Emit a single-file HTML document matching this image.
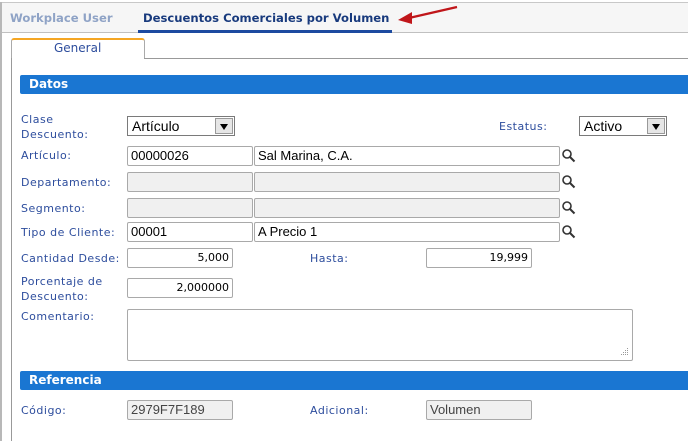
<!DOCTYPE html>
<html><head><meta charset="utf-8"><style>
*{box-sizing:border-box;margin:0;padding:0}
body{width:688px;height:441px;background:#fff;position:relative;overflow:hidden;font-family:"DejaVu Sans",Verdana,sans-serif}
.a{position:absolute}
.lbl{position:absolute;font-size:11px;color:#2d4d9d;line-height:15px;letter-spacing:0.5px}
.in{position:absolute;height:20px;border:1px solid #a9a9a9;border-radius:2px;background:#fff;font-family:"Liberation Sans",Arial,sans-serif;font-size:13px;color:#000;line-height:18px;padding-left:3px;white-space:nowrap}
.dis{background:#f0f0f0}
.num{text-align:right;padding-right:3px;font-family:"DejaVu Sans",Verdana,sans-serif;font-size:11px}
.bar{position:absolute;left:20px;width:668px;height:19px;background:#1a76d2;color:#fff;font-weight:bold;font-size:12px;line-height:19px;padding-left:9px;border-radius:2px 0 0 2px}
.sel{position:absolute;height:20px;border:1px solid #7a7a7a;background:#fff;font-family:"Liberation Sans",Arial,sans-serif;font-size:14px;line-height:18px;padding-left:4px}
.sel b{position:absolute;right:1px;top:1px;width:18px;height:16px;background:#e6e6e6;border:1px solid #999}
.sel b:after{content:"";position:absolute;left:4px;top:5px;border-left:4px solid transparent;border-right:4px solid transparent;border-top:6px solid #000}
.mag{position:absolute;width:16px;height:16px}
</style></head><body>
<div class="a" style="left:0;top:2px;width:688px;height:30px;background:#f6f6f6;border-top:1px solid #c8c8c8;border-left:1px solid #aaa"></div>
<div class="a" style="left:0;top:32px;width:688px;height:1px;background:#c0c0c0"></div>
<div class="a" style="left:0;top:2px;width:2px;height:439px;background:#b8b8b8"></div>
<div class="a" style="left:10px;top:11px;font-size:11.6px;font-weight:bold;color:#8fa3c6">Workplace User</div>
<div class="a" style="left:143px;top:11px;font-size:11.6px;font-weight:bold;color:#183a7d">Descuentos Comerciales por Volumen</div>
<div class="a" style="left:138px;top:30px;width:254px;height:3px;background:#1c4aa0"></div>
<svg class="a" style="left:395px;top:4px" width="65" height="22"><path d="M62 3 L14 14" stroke="#c0161a" stroke-width="2.2"/><path d="M3 16 L17 8 L17 20 Z" fill="#c0161a"/></svg>
<div class="a" style="left:11px;top:38px;width:134px;height:21px;border:1px solid #aaa;border-top:2px solid #f5a623;border-bottom:none;background:#fff;border-radius:3px 3px 0 0"></div>
<div class="a" style="left:54px;top:41px;font-size:12px;color:#2d4d9d">General</div>
<div class="a" style="left:144px;top:58px;width:544px;height:1px;background:#999"></div>
<div class="a" style="left:11px;top:58px;width:1px;height:383px;background:#999"></div>
<div class="bar" style="top:75px">Datos</div>
<div class="lbl" style="left:21px;top:112px">Clase<br>Descuento:</div>
<div class="sel" style="left:127px;top:116px;width:108px">Artículo<b></b></div>
<div class="lbl" style="left:499px;top:119px">Estatus:</div>
<div class="sel" style="left:579px;top:116px;width:88px">Activo<b></b></div>
<div class="lbl" style="left:21px;top:148px">Artículo:</div>
<div class="in" style="left:127px;top:146px;width:126px">00000026</div>
<div class="in" style="left:254px;top:146px;width:306px">Sal Marina, C.A.</div>
<div class="lbl" style="left:21px;top:175px">Departamento:</div>
<div class="in dis" style="left:127px;top:172px;width:126px"></div>
<div class="in dis" style="left:254px;top:172px;width:306px"></div>
<div class="lbl" style="left:21px;top:201px">Segmento:</div>
<div class="in dis" style="left:127px;top:198px;width:126px"></div>
<div class="in dis" style="left:254px;top:198px;width:306px"></div>
<div class="lbl" style="left:21px;top:225px">Tipo de Cliente:</div>
<div class="in" style="left:127px;top:222px;width:126px">00001</div>
<div class="in" style="left:254px;top:222px;width:306px">A Precio 1</div>
<svg class="mag" style="left:561px;top:148px" viewBox="0 0 16 16"><circle cx="6" cy="6" r="4" fill="none" stroke="#333" stroke-width="1.6"/><path d="M9 9 L13.5 13.5" stroke="#333" stroke-width="2"/></svg>
<svg class="mag" style="left:561px;top:174px" viewBox="0 0 16 16"><circle cx="6" cy="6" r="4" fill="none" stroke="#333" stroke-width="1.6"/><path d="M9 9 L13.5 13.5" stroke="#333" stroke-width="2"/></svg>
<svg class="mag" style="left:561px;top:200px" viewBox="0 0 16 16"><circle cx="6" cy="6" r="4" fill="none" stroke="#333" stroke-width="1.6"/><path d="M9 9 L13.5 13.5" stroke="#333" stroke-width="2"/></svg>
<svg class="mag" style="left:561px;top:224px" viewBox="0 0 16 16"><circle cx="6" cy="6" r="4" fill="none" stroke="#333" stroke-width="1.6"/><path d="M9 9 L13.5 13.5" stroke="#333" stroke-width="2"/></svg>
<div class="lbl" style="left:21px;top:251px">Cantidad Desde:</div>
<div class="in num" style="left:127px;top:248px;width:106px">5,000</div>
<div class="lbl" style="left:310px;top:251px">Hasta:</div>
<div class="in num" style="left:426px;top:248px;width:106px">19,999</div>
<div class="lbl" style="left:21px;top:274px">Porcentaje de<br>Descuento:</div>
<div class="in num" style="left:127px;top:278px;width:106px">2,000000</div>
<div class="lbl" style="left:21px;top:309px">Comentario:</div>
<div class="in" style="left:127px;top:309px;width:506px;height:52px"></div>
<svg class="a" style="left:620px;top:347px" width="10" height="10"><g fill="#999"><rect x="7" y="1" width="1" height="1"/><rect x="5" y="3" width="1" height="1"/><rect x="7" y="3" width="1" height="1"/><rect x="3" y="5" width="1" height="1"/><rect x="5" y="5" width="1" height="1"/><rect x="7" y="5" width="1" height="1"/><rect x="1" y="7" width="1" height="1"/><rect x="3" y="7" width="1" height="1"/><rect x="5" y="7" width="1" height="1"/><rect x="7" y="7" width="1" height="1"/></g></svg>
<div class="bar" style="top:371px">Referencia</div>
<div class="lbl" style="left:21px;top:403px">Código:</div>
<div class="in dis" style="left:127px;top:400px;width:106px;color:#444">2979F7F189</div>
<div class="lbl" style="left:310px;top:403px">Adicional:</div>
<div class="in dis" style="left:426px;top:400px;width:106px;color:#444">Volumen</div>
</body></html>
